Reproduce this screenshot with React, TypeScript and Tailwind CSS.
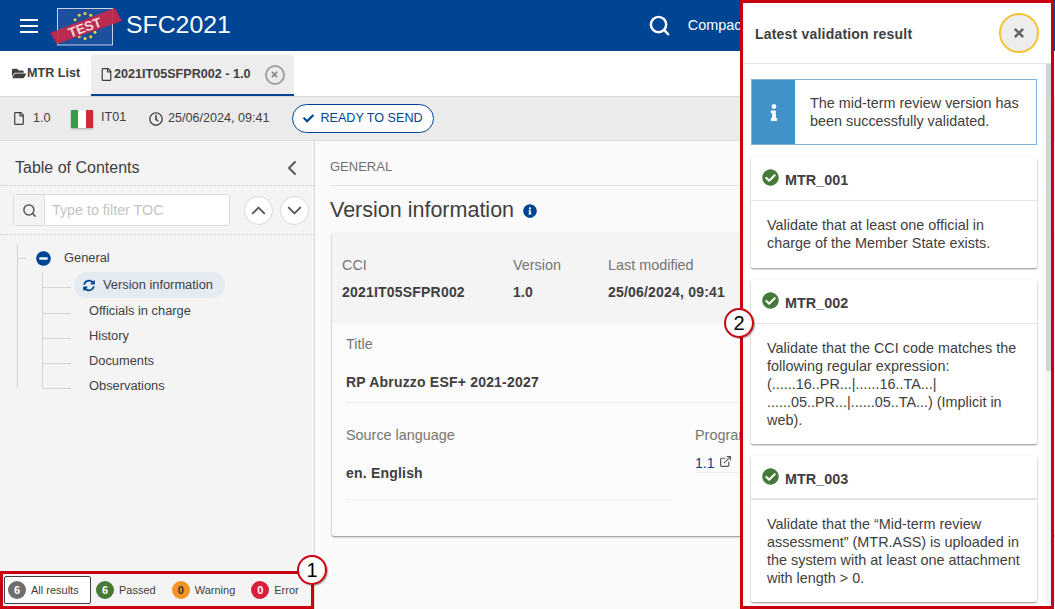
import React from "react";
import { FaFolderOpen, FaRegFile, FaRegClock, FaCheck, FaTimes, FaCheckCircle, FaInfoCircle, FaInfo, FaMinusCircle, FaSyncAlt } from "react-icons/fa";
import { Search, ChevronUp, ChevronDown, ChevronLeft, ExternalLink } from "lucide-react";

const font = "font-['Liberation_Sans',Arial,sans-serif]";

function Logo() {
  const stars = Array.from({ length: 12 }, (_, i) => {
    const a = (i * Math.PI) / 6;
    return { x: 35 + 11.5 * Math.cos(a), y: 23 + 12.5 * Math.sin(a) };
  });
  return (
    <svg width="72" height="46" viewBox="0 0 72 46" className="block overflow-visible">
      <rect x="7.5" y="5.5" width="55" height="36.5" fill="#1c4f9c" stroke="#c6d3e6" strokeWidth="1" />
      {stars.map((s, i) => (
        <circle key={i} cx={s.x} cy={s.y} r="1.5" fill="#f4d43a" />
      ))}
      <polygon points="0,30 65,5 72,18 7,41" fill="#c8284a" fillOpacity="0.92" />
      <text x="35" y="29" textAnchor="middle" fill="#f3d9dd" fontSize="13.5" fontWeight="700" fontFamily="Liberation Sans" transform="rotate(-20 35 25)">TEST</text>
    </svg>
  );
}

function Toc({ label, active }: { label: string; active?: boolean }) {
  return (
    <div className={`relative flex items-center pl-[89px] text-[12.85px] text-[#404040] ${active ? "h-[26px]" : "h-[25px] pt-px"}`}>
      <span className="absolute left-[43px] top-[15px] h-px w-[28px] bg-[#d4d4d4]" />
      {active ? (
        <span className="absolute left-[74px] top-0 flex h-[26px] w-[151px] items-center whitespace-nowrap rounded-full bg-[#e5ebf3] pl-[9px]">
          <FaSyncAlt className="h-[13px] w-[12px] shrink-0 text-[#004494]" />
          <span className="ml-[8px]">{label}</span>
        </span>
      ) : (
        label
      )}
    </div>
  );
}

function Count({ n, label, color, dark }: { n: number; label: string; color: string; dark?: boolean }) {
  return (
    <div className="flex items-center gap-[5px] whitespace-nowrap text-[11px] text-[#404040]">
      <span style={{ backgroundColor: color }} className={`flex h-[18px] w-[18px] items-center justify-center rounded-full text-[11px] font-bold ${dark ? "text-[#333]" : "text-white"}`}>
        {n}
      </span>
      {label}
    </div>
  );
}

function Callout({ n, className }: { n: number; className: string }) {
  return (
    <span className={`absolute z-20 flex h-[30px] w-[30px] items-center justify-center rounded-full border-2 border-[#c8000f] bg-[radial-gradient(circle_at_40%_40%,#ffffff_60%,#f3c9cc)] text-[20px] text-black shadow-[1px_1px_1px_rgba(0,0,0,0.35)] ${className}`}>
      {n}
    </span>
  );
}

function Rule({ title, className, bodyClass, lines }: { title: string; className: string; bodyClass: string; lines: string[] }) {
  return (
    <div className={`ml-[8px] w-[286px] rounded-[2px] bg-white shadow-[0_1px_2px_rgba(0,0,0,0.45)] ${className}`}>
      <div className={`flex h-[44px] items-start border-[#e3e3e3] pl-[11px] ${bodyClass}`}>
        <FaCheckCircle className="mt-[12px] h-[17px] w-[17px] text-[#467a39]" />
        <span className="ml-[6px] mt-[15px] text-[14.4px] font-bold leading-[16px] text-[#404040]">{title}</span>
      </div>
      <div className="px-[16px] pt-[15px] text-[14.4px] leading-[18px] text-[#404040]">
        {lines.map((l) => (
          <div key={l} className="whitespace-nowrap">{l}</div>
        ))}
      </div>
    </div>
  );
}

function Label({ children, className = "" }: { children: React.ReactNode; className?: string }) {
  return <div className={`text-[14.4px] leading-[16px] text-[#757575] ${className}`}>{children}</div>;
}

const strong = "text-[14px] font-bold leading-[16px] tracking-[0.2px] text-[#404040]";

export default function App() {
  return (
    <div className={`${font} relative flex h-[609px] w-[1055px] flex-col overflow-hidden bg-white`}>
      <header className="flex h-[51px] shrink-0 items-center bg-[#004494] text-white">
        <span className="ml-[20px] flex h-[14px] w-[18px] flex-col justify-between">
          <span className="h-[2px] bg-white" /><span className="h-[2px] bg-white" /><span className="h-[2px] bg-white" />
        </span>
        <div className="ml-[12px]"><Logo /></div>
        <span className="ml-[4px] text-[24.8px] leading-none">SFC2021</span>
        <Search className="ml-[417px] h-[23px] w-[23px]" strokeWidth={2.6} />
        <span className="ml-[17px] text-[14.4px]">Compact</span>
      </header>

      <nav className="flex h-[46px] shrink-0 items-end border-b border-[#d9d9d9] bg-white">
        <div className="flex h-[45px] w-[91px] items-center pl-[12px] text-[12.6px] font-bold text-[#404040]">
          <FaFolderOpen className="mr-px h-[13px] w-[14px] text-[#404040]" />MTR List
        </div>
        <div className="flex h-[41px] w-[203px] items-center whitespace-nowrap rounded-t-[2px] border-b-2 border-[#004494] bg-[#ededed] pl-[9px] text-[12.6px] font-bold text-[#404040]">
          <FaRegFile className="mr-px h-[13px] w-[13px] shrink-0" />2021IT05SFPR002 - 1.0
          <span className="ml-[14px] flex h-[20px] w-[20px] shrink-0 items-center justify-center rounded-full border-2 border-[#a0a0a0] text-[#8a8a8a]">
            <FaTimes className="h-[9px] w-[9px]" />
          </span>
        </div>
      </nav>

      <div className="flex h-[44px] shrink-0 items-center border-b border-[#dcdcdc] bg-[#ebebeb] text-[12.6px] text-[#404040]">
        <FaRegFile className="ml-[13px] h-[13px] w-[12px] shrink-0" />
        <span className="ml-[8px] w-[16px]">1.0</span>
        <span className="ml-[22px] flex h-[18px] w-[22px] shrink-0 shadow-[0_1px_2px_rgba(0,0,0,0.3)]">
          <span className="flex-1 bg-[#3a9a48]" /><span className="flex-1 bg-white" /><span className="flex-1 bg-[#d32a36]" />
        </span>
        <span className="ml-[8px] -mt-[2px] w-[24px]">IT01</span>
        <FaRegClock className="ml-[24px] mt-px h-[14px] w-[14px] shrink-0" />
        <span className="ml-[5px] w-[102px] whitespace-nowrap">25/06/2024, 09:41</span>
        <span className="ml-[22px] flex h-[29px] w-[142px] items-center justify-center gap-[6px] whitespace-nowrap rounded-full border border-[#004494] bg-white text-[#004494]">
          <FaCheck className="h-[11px] w-[11px]" /><span className="-mt-px">READY TO SEND</span>
        </span>
      </div>

      <div className="flex min-h-0 flex-1">
        <aside className="flex w-[315px] shrink-0 flex-col border-r border-[#dcdcdc] bg-[#f4f4f4]">
          <div className="flex h-[45px] shrink-0 items-center justify-between border-b border-dotted border-[#cfcfcf] pl-[15px] pr-[10px] pt-[9px]">
            <span className="text-[16px] text-[#404040]">Table of Contents</span>
            <ChevronLeft className="h-[24px] w-[24px] text-[#595959]" strokeWidth={2} />
          </div>
          <div className="flex h-[49px] shrink-0 items-center border-b border-dotted border-[#cfcfcf] pl-[13px]">
            <div className="flex h-[32px] w-[217px] rounded-[3px] border border-[#dcdcdc] bg-white">
              <span className="flex w-[31px] items-center justify-center border-r border-[#dcdcdc] bg-[#f4f4f4]"><Search className="h-[15px] w-[15px] text-[#595959]" strokeWidth={2.4} /></span>
              <span className="flex items-center pl-[7px] pt-px text-[14.3px] text-[#c4c4c4]">Type to filter TOC</span>
            </div>
            <span className="ml-[14px] flex h-[29px] w-[29px] items-center justify-center rounded-full border border-[#d9d9d9] bg-white"><ChevronUp className="h-[23px] w-[23px] text-[#595959]" strokeWidth={2} /></span>
            <span className="ml-[7px] flex h-[29px] w-[29px] items-center justify-center rounded-full border border-[#d9d9d9] bg-white"><ChevronDown className="h-[23px] w-[23px] text-[#595959]" strokeWidth={2} /></span>
          </div>
          <div className="relative flex-1 pt-[10px]">
            <span className="absolute left-[17px] top-[9px] h-[144px] w-px bg-[#d4d4d4]" />
            <span className="absolute left-[42px] top-[37px] h-[116px] w-px bg-[#d4d4d4]" />
            <div className="relative flex h-[27px] items-center text-[12.85px] text-[#404040]">
              <span className="absolute left-[17px] top-[13px] h-px w-[10px] bg-[#d4d4d4]" />
              <FaMinusCircle className="ml-[36px] h-[15px] w-[15px] text-[#004494]" />
              <span className="-mt-px ml-[13px]">General</span>
            </div>
            <Toc label="Version information" active />
            <Toc label="Officials in charge" />
            <Toc label="History" />
            <Toc label="Documents" />
            <Toc label="Observations" />
          </div>
          <div className="relative flex h-[38px] shrink-0 items-center border-[3px] border-[#c8000f] pl-[1px]">
            <div className="flex h-[28px] w-[87px] items-center rounded-[2px] border border-[#404040] bg-white pl-[3px]">
              <Count n={6} label="All results" color="#6e6e6e" />
            </div>
            <div className="ml-[5px]"><Count n={6} label="Passed" color="#467a39" /></div>
            <div className="ml-[16px]"><Count n={0} label="Warning" color="#f39325" dark /></div>
            <div className="ml-[16px]"><Count n={0} label="Error" color="#da1e3c" /></div>
            <Callout n={1} className="-right-[16px] -top-[19px]" />
          </div>
        </aside>

        <main className="min-w-0 flex-1 bg-[#fafafa] pl-[15px]">
          <div className="flex h-[45px] items-center border-b border-[#e3e3e3] pt-[8px] text-[13px] text-[#707070]">GENERAL</div>
          <h1 className="mt-[10px] flex items-center text-[21.5px] font-normal leading-[28px] text-[#404040]">
            Version information
            <FaInfoCircle className="ml-[9px] mt-[2px] h-[14px] w-[14px] text-[#004494]" />
          </h1>
          <section className="ml-[2px] mt-[9px] h-[303px] overflow-hidden rounded-[2px] bg-[#fbfbfb] shadow-[0_1px_2px_rgba(0,0,0,0.45)]">
            <div className="h-[90px] bg-[#f4f4f4] pl-[10px] pt-[24px]">
              <div className="flex">
                <Label className="w-[171px]">CCI</Label>
                <Label className="w-[95px]">Version</Label>
                <Label>Last modified</Label>
              </div>
              <div className={`mt-[11px] flex ${strong}`}>
                <span className="w-[171px]">2021IT05SFPR002</span>
                <span className="w-[95px]">1.0</span>
                <span className="whitespace-nowrap">25/06/2024, 09:41</span>
              </div>
            </div>
            <div className="pl-[14px] pt-[13px]">
              <Label>Title</Label>
              <div className={`mt-[22px] h-[29px] border-b border-[#f0f0f0] ${strong}`}>RP Abruzzo ESF+ 2021-2027</div>
              <div className="mt-[24px] flex">
                <div className="w-[349px]">
                  <Label>Source language</Label>
                  <div className={`mt-[22px] h-[35px] w-[327px] border-b border-[#f0f0f0] ${strong}`}>en. English</div>
                </div>
                <div>
                  <Label>Programme</Label>
                  <div className="mt-[12px] flex h-[18px] w-[60px] items-start gap-[5px] border-b border-[#f0f0f0] text-[14px] leading-[16px] text-[#004494]">
                    1.1<ExternalLink className="h-[13px] w-[13px] text-[#595959]" strokeWidth={2.2} />
                  </div>
                </div>
              </div>
            </div>
          </section>
        </main>
      </div>

      <div className="absolute bottom-0 left-[740px] top-0 z-10 flex w-[314px] flex-col overflow-hidden border-[3px] border-[#c8000f] bg-white">
        <div className="flex h-[61px] shrink-0 items-center justify-between border-b border-[#e3e3e3] pl-[12px] pr-[12px]">
          <span className="mt-[2px] text-[14px] font-bold tracking-[0.2px] text-[#404040]">Latest validation result</span>
          <span className="flex h-[40px] w-[40px] items-center justify-center rounded-full border-2 border-[#f5c33b] bg-[#ededed]"><FaTimes className="h-[14px] w-[14px] text-[#666]" /></span>
        </div>
        <div className="relative min-h-0 flex-1">
          <span className="absolute bottom-0 right-0 top-0 w-[5px] bg-[#f4f4f4]" />
          <span className="absolute right-0 top-0 h-[307px] w-[5px] bg-[#d4d4d4]" />
          <div className="ml-[8px] mt-[15px] flex h-[66px] w-[286px] border border-[#7fb2d6] bg-white">
            <div className="flex w-[43px] items-center justify-center bg-[#4092c9]"><FaInfo className="h-[17px] w-[8px] text-white" /></div>
            <div className="whitespace-nowrap pl-[15px] pt-[14px] text-[14.4px] leading-[18px] text-[#404040]">
              The mid-term review version has<br />been successfully validated.
            </div>
          </div>
          <Rule className="mt-[12px] h-[111px]" bodyClass="border-b" title="MTR_001" lines={["Validate that at least one official in", "charge of the Member State exists."]} />
          <Rule className="mt-[12px] h-[164px]" bodyClass="border-b" title="MTR_002" lines={["Validate that the CCI code matches the", "following regular expression:", "(......16..PR...|......16..TA...|", "......05..PR...|......05..TA...) (Implicit in", "web)."]} />
          <Rule className="mt-[12px] h-[146px]" bodyClass="border-b-2" title="MTR_003" lines={["Validate that the \u201CMid-term review", "assessment\u201D (MTR.ASS) is uploaded in", "the system with at least one attachment", "with length > 0."]} />
        </div>
      </div>
      <Callout n={2} className="left-[724px] top-[308px]" />
    </div>
  );
}
